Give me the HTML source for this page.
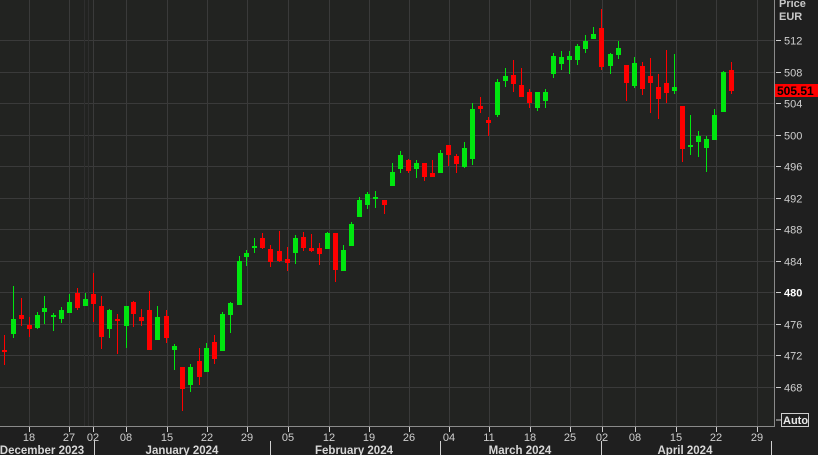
<!DOCTYPE html>
<html><head><meta charset="utf-8"><style>
html,body{margin:0;padding:0;background:#1f1f1f;width:818px;height:455px;overflow:hidden}
svg{display:block}
text{font-family:"Liberation Sans",Arial,sans-serif}
</style></head><body>
<svg id="s" width="818" height="455" xmlns="http://www.w3.org/2000/svg">
<rect x="0" y="0" width="818" height="455" fill="#1f1f1f"/>
<rect x="0" y="0" width="774" height="426" fill="#222321"/>
<g id="grid" stroke="#3a3a3a" stroke-width="1"></g>
<g id="c"></g>
<line x1="774.5" y1="0" x2="774.5" y2="427" stroke="#8a8a8a"/>
<line x1="0" y1="426.5" x2="775" y2="426.5" stroke="#8a8a8a"/>
<g fill="#c8c8c8" font-size="11" font-weight="bold">
<text x="779" y="7">Price</text>
<text x="779" y="20">EUR</text>
</g>
<g id="yl" fill="#cfcfcf" font-size="11"></g>
<rect x="775" y="84" width="43" height="13" fill="#ff0000"/>
<text x="777" y="95" font-size="12" font-weight="bold" fill="#000">505.51</text>
<rect x="781.5" y="413.5" width="27" height="13" fill="none" stroke="#cfcfcf"/>
<line x1="776" y1="420" x2="781" y2="420" stroke="#cfcfcf"/>
<text x="783" y="424" font-size="11" font-weight="bold" fill="#e8e8e8">Auto</text>
<g id="xl" fill="#cfcfcf" font-size="11" text-anchor="middle"></g>
<g fill="#d8d8d8" font-size="11.5" font-weight="bold" text-anchor="middle">
<text x="42" y="454">December 2023</text>
<text x="182" y="454">January 2024</text>
<text x="354" y="454">February 2024</text>
<text x="520" y="454">March 2024</text>
<text x="685" y="454">April 2024</text>
</g>
<g stroke="#cfcfcf"><line x1="94.5" y1="441" x2="94.5" y2="455"/><line x1="270.5" y1="441" x2="270.5" y2="455"/><line x1="440.5" y1="441" x2="440.5" y2="455"/><line x1="601.5" y1="441" x2="601.5" y2="455"/><line x1="771.5" y1="441" x2="771.5" y2="455"/></g>
</svg>
<script>
var NS="http://www.w3.org/2000/svg";
function el(p,t,a,txt){var e=document.createElementNS(NS,t);for(var k in a)e.setAttribute(k,a[k]);if(txt)e.textContent=txt;document.getElementById(p).appendChild(e);}
var prices=[512,508,504,500,496,492,488,484,480,476,472,468];
prices.forEach(function(p){var y=Math.round(40+(512-p)*7.88)+0.5;
el("grid","line",{x1:0,y1:y,x2:774,y2:y});
el("yl","line",{x1:776,y1:y,x2:781,y2:y,stroke:"#cfcfcf"});
el("yl","text",{x:784,y:y+4,"font-weight":p==480?"bold":"normal",fill:p==480?"#ffffff":"#cfcfcf"},String(p));});
var xs=[[29,"18"],[69,"27"],[93,"02"],[126,"08"],[167,"15"],[207,"22"],[247,"29"],[288,"05"],[329,"12"],[369,"19"],[409,"26"],[449,"04"],[489,"11"],[530,"18"],[570,"25"],[602,"02"],[635,"08"],[676,"15"],[716,"22"],[757,"29"]];
xs.forEach(function(a){var x=a[0]+0.5;el("grid","line",{x1:x,y1:0,x2:x,y2:426});
el("xl","line",{x1:x,y1:427,x2:x,y2:432,stroke:"#cfcfcf"});
el("xl","text",{x:a[0],y:441},a[1]);});
el("grid","line",{x1:84.5,y1:0,x2:84.5,y2:426,stroke:"#2e2e2e"});
el("grid","line",{x1:88.5,y1:0,x2:88.5,y2:426,stroke:"#2e2e2e"});
var d=[
[4,335,365,350,352,0],[12.5,286,338,319,334,1],[20.5,298,326,315,319,0],[28.5,317,337,325,329,0],[36.5,312,329,315,328,1],[44,296,324,308,312,1],[53,313,331,315,317,1],[61,307,323,310,319,1],[69,294,313,302,313,1],[77,288,310,293,308,0],[85,293,306,299,306,1],[93,273,322,294,304,0],[101,296,349,306,337,0],[109,309,338,310,329,1],[117,314,354,319,321,0],[125.5,306,348,306,326,1],[133,301,327,302,314,0],[141,309,326,317,321,0],[149,291,350,310,350,0],[157,306,340,317,340,1],[165.5,310,343,316,338,0],[174,344,370,346,350,1],[182,367,411,367,389,0],[190,364,392,367,385,1],[198.5,348,385,361,377,0],[206,343,372,348,372,1],[214,335,364,342,359,0],[222,312,351,314,351,1],[230,302,333,303,315,1],[238.5,256,305,261,305,1],[246,250,266,253,257,1],[254,238,253,246,248,1],
[262.3,233,249,238,248,0],[270.3,245,267,249,262,0],[279.3,231,262,251,261,0],[287.3,247,271,259,263,0],[295.3,235,264,238,253,1],[303.3,232,251,237,248,0],[311.3,234,252,248,251,0],[319.3,243,265,248,254,0],[327.3,232,249,233,249,1],[335.3,233,282,233,270,0],[343.3,245,271,250,271,1],[351.3,222,246,224,246,1],[359.3,197,217,200,217,1],[367.3,192,209,194,205,1],[375.3,191,208,197,199,1],[384.3,200,214,200,205,0],[392.3,163,186,172,186,1],[400.3,151,173,155,169,1],[408.3,159,173,160,171,0],[416.3,160,178,163,169,1],[424.3,163,181,163,177,0],[432.3,160,177,173,177,0],[440.3,150,173,153,173,1],[448.3,145,166,145,155,0],[456.3,154,173,156,164,0],[464.3,142,168,148,167,1],
[472.3,103,165,109,159,1],[480.3,97,113,106,109,0],[488.3,117,136,120,123,0],[497.3,79,117,82,115,1],[505.3,68,87,76,81,1],[513.3,60,92,75,84,0],[521.3,68,97,85,97,0],[529.3,89,108,92,103,0],[537.3,92,111,92,108,1],[545.3,89,108,92,101,1],[553.3,53,78,56,74,1],[561.3,51,70,57,64,1],[569.3,51,74,56,60,1],[577.3,44,65,46,60,1],[585.3,35,53,41,49,1],[593.3,27,39,34,39,1],[601.3,9,70,28,67,0],[610.3,53,74,54,66,1],[618.3,41,59,48,55,1],[626.3,65,101,65,83,0],[634.3,57,88,63,86,1],[642.3,62,95,66,89,0],[650.3,58,113,76,83,0],[658.3,74,119,87,99,0],[666.3,50,103,83,93,0],[674.3,54,94,87,91,1],[682.3,106,162,106,149,0],[690.3,115,155,145,147,1],[698.3,131,157,136,142,1],[706.3,136,172,139,148,1],[714.3,109,140,115,140,1],[723.3,71,112,72,112,1],[731.3,62,94,70,91,0]];
d.forEach(function(c){var col=c[5]?"#00e60f":"#ff0000";var x=Math.round(c[0]);
el("c","rect",{x:x,y:c[1],width:1,height:c[2]-c[1],fill:col});
el("c","rect",{x:x-2,y:c[3],width:5,height:Math.max(2,c[4]-c[3]),fill:col});});
</script>
</body></html>
